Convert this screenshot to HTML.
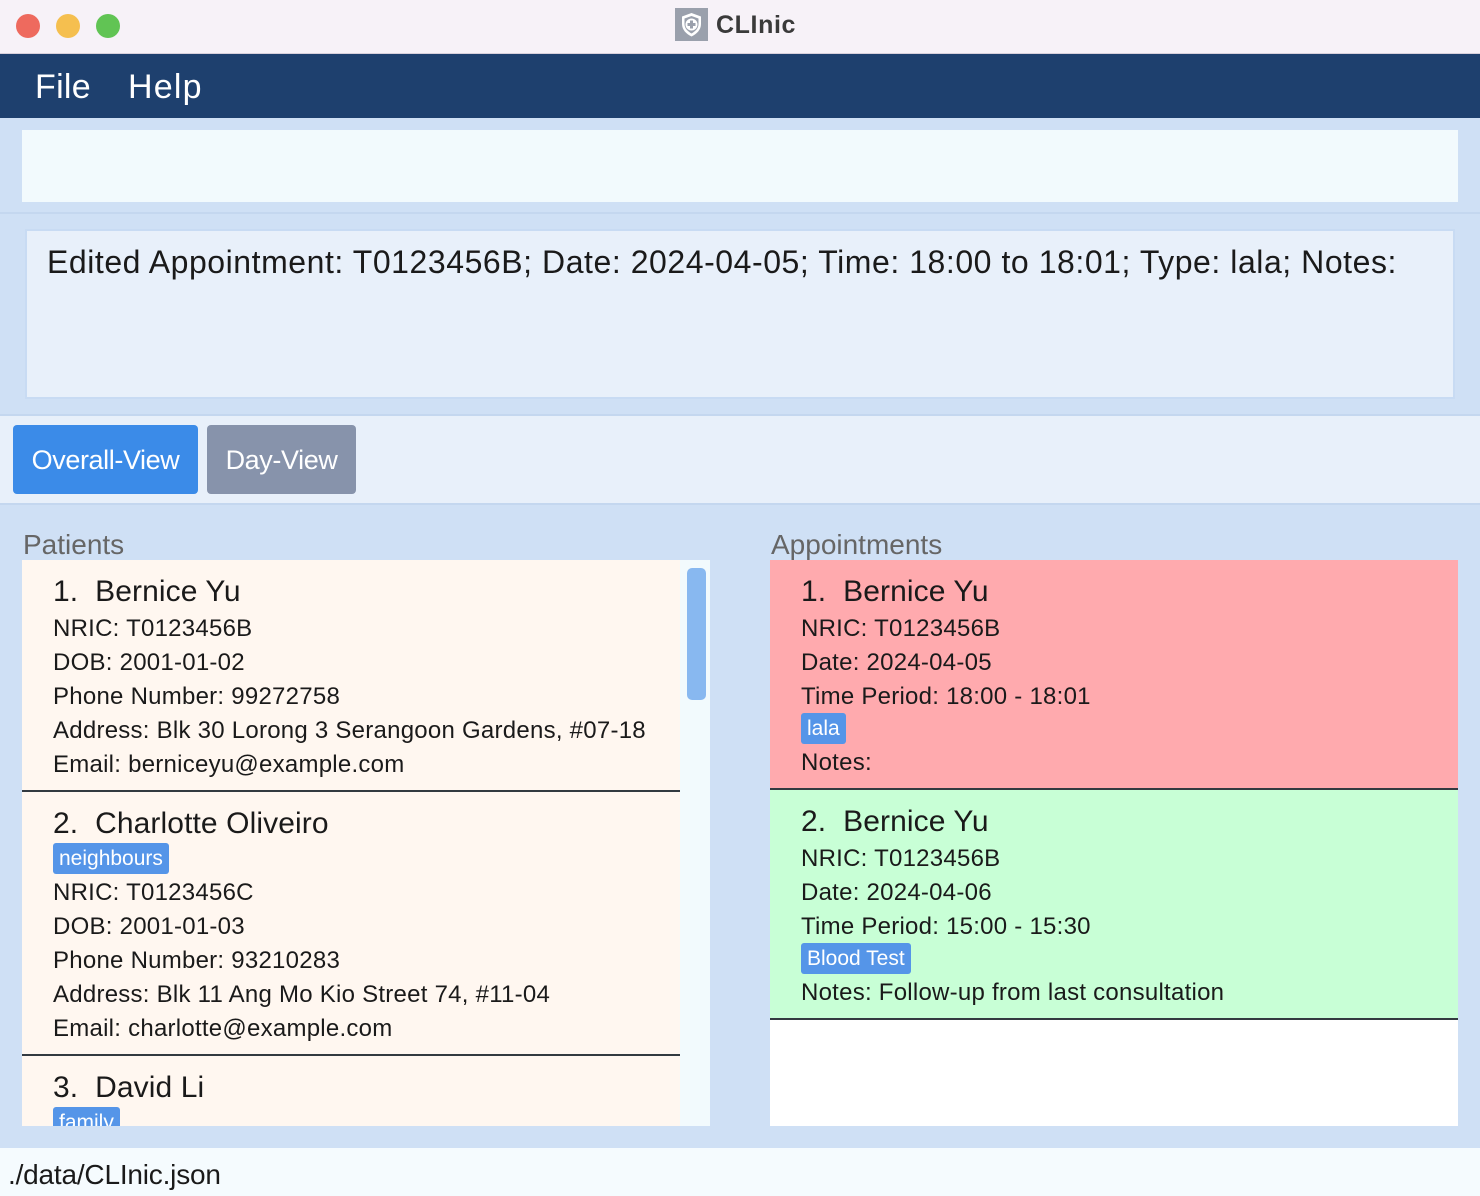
<!DOCTYPE html>
<html><head><meta charset="utf-8"><style>
*{margin:0;padding:0;box-sizing:border-box}
body{width:1480px;height:1196px;overflow:hidden;background:#cfe0f5;font-family:"Liberation Sans",sans-serif;position:relative;color:#1a1a1a}
.abs{position:absolute}
.t{white-space:nowrap;letter-spacing:-0.4px}
.title{top:0;left:0;width:1480px;height:54px;background:#f7f2f8;border-bottom:1px solid #d8d0dc}
.dot{width:24px;height:24px;border-radius:50%;top:14px}
.menu{top:54px;left:0;width:1480px;height:64px;background:#1e406e}
.card{position:absolute;left:0;width:100%}
.card .ln{position:absolute;left:31px;font-size:24px;white-space:nowrap;letter-spacing:0.25px}
.card .nm{position:absolute;left:31px;font-size:30px;white-space:nowrap;letter-spacing:0.1px}
.tag{position:absolute;left:31px;background:#5595e8;color:#fff;font-size:21px;height:31px;line-height:31px;padding:0 6px;border-radius:3px;white-space:nowrap;letter-spacing:0}
.div{position:absolute;left:0;width:100%;height:2px;background:#333a40}
</style></head><body>
<div class="abs title"></div>
<div class="abs dot" style="left:16px;background:#ee6a5e"></div>
<div class="abs dot" style="left:56px;background:#f5bf4f"></div>
<div class="abs dot" style="left:96px;background:#61c454"></div>
<svg class="abs" style="left:675px;top:8px" width="33" height="33" viewBox="0 0 33 33"><rect width="33" height="33" fill="#9aa0ac"/><path d="M16.5 5 L26 8.5 V16 C26 22 21.5 26 16.5 28.5 C11.5 26 7 22 7 16 V8.5 Z" fill="#fff"/><path d="M16.5 8 L23.5 10.5 V16 C23.5 20.5 20 23.5 16.5 25.5 C13 23.5 9.5 20.5 9.5 16 V10.5 Z" fill="#9aa0ac"/><circle cx="16.5" cy="16.5" r="6" fill="#fff"/><path d="M15 12.5h3v2.5h2.5v3h-2.5v2.5h-3v-2.5h-2.5v-3h2.5z" fill="#9aa0ac"/></svg>
<div class="abs t" style="left:716px;top:11px;font-size:25px;font-weight:bold;color:#3a3a3a;letter-spacing:0.6px">CLInic</div>
<div class="abs menu"></div>
<div class="abs t" style="left:35px;top:68px;font-size:34px;color:#fff;letter-spacing:0.3px">File</div>
<div class="abs t" style="left:128px;top:68px;font-size:34px;color:#fff;letter-spacing:1.2px">Help</div>
<div class="abs" style="left:22px;top:130px;width:1436px;height:72px;background:#f2fafd"></div>
<div class="abs" style="left:0;top:212px;width:1480px;height:2px;background:#c4d7ef"></div>
<div class="abs" style="left:25px;top:229px;width:1430px;height:170px;background:#e8f0fa;border:2px solid #c8dbf3"></div>
<div class="abs t" style="left:47px;top:244px;font-size:32px;letter-spacing:0.55px">Edited Appointment: T0123456B; Date: 2024-04-05; Time: 18:00 to 18:01; Type: lala; Notes:</div>
<div class="abs" style="left:0;top:414px;width:1480px;height:91px;background:#e8f0fa;border-top:2px solid #c4d7ef;border-bottom:2px solid #c4d7ef"></div>
<div class="abs" style="left:13px;top:425px;width:185px;height:69px;background:#3b8be8;border-radius:4px"></div>
<div class="abs t" style="left:13px;top:445px;width:185px;text-align:center;font-size:27px;color:#fff">Overall-View</div>
<div class="abs" style="left:207px;top:425px;width:149px;height:69px;background:#8793ab;border-radius:4px"></div>
<div class="abs t" style="left:207px;top:445px;width:149px;text-align:center;font-size:27px;color:#fff">Day-View</div>
<div class="abs t" style="left:23px;top:529px;font-size:28px;color:#666;letter-spacing:0">Patients</div>
<div class="abs t" style="left:771px;top:529px;font-size:28px;color:#666;letter-spacing:0">Appointments</div>
<div class="abs" style="left:22px;top:560px;width:688px;height:566px;background:#f2fafd;overflow:hidden">
 <div class="abs" style="left:665px;top:8px;width:19px;height:132px;background:#88b8f0;border-radius:5px"></div>
 <div class="abs" style="left:0;top:0;width:658px;height:566px;background:#fff7f0">
  <div class="card" style="top:0;height:230px">
   <div class="nm" style="top:15px">1.&nbsp; Bernice Yu</div>
   <div class="ln" style="top:55px">NRIC: T0123456B</div>
   <div class="ln" style="top:89px">DOB: 2001-01-02</div>
   <div class="ln" style="top:123px">Phone Number: 99272758</div>
   <div class="ln" style="top:157px">Address: Blk 30 Lorong 3 Serangoon Gardens, #07-18</div>
   <div class="ln" style="top:191px">Email: berniceyu@example.com</div>
  </div>
  <div class="div" style="top:230px"></div>
  <div class="card" style="top:232px">
   <div class="nm" style="top:15px">2.&nbsp; Charlotte Oliveiro</div>
   <div class="tag" style="top:51px">neighbours</div>
   <div class="ln" style="top:87px">NRIC: T0123456C</div>
   <div class="ln" style="top:121px">DOB: 2001-01-03</div>
   <div class="ln" style="top:155px">Phone Number: 93210283</div>
   <div class="ln" style="top:189px">Address: Blk 11 Ang Mo Kio Street 74, #11-04</div>
   <div class="ln" style="top:223px">Email: charlotte@example.com</div>
  </div>
  <div class="div" style="top:494px"></div>
  <div class="card" style="top:496px">
   <div class="nm" style="top:15px">3.&nbsp; David Li</div>
   <div class="tag" style="top:51px">family</div>
  </div>
 </div>
</div>
<div class="abs" style="left:770px;top:560px;width:688px;height:566px;background:#fff;overflow:hidden">
 <div class="card" style="top:0;height:228px;background:#ffaaae">
  <div class="nm" style="top:15px">1.&nbsp; Bernice Yu</div>
  <div class="ln" style="top:55px">NRIC: T0123456B</div>
  <div class="ln" style="top:89px">Date: 2024-04-05</div>
  <div class="ln" style="top:123px">Time Period: 18:00 - 18:01</div>
  <div class="tag" style="top:153px">lala</div>
  <div class="ln" style="top:189px">Notes:</div>
 </div>
 <div class="div" style="top:228px"></div>
 <div class="card" style="top:230px;height:228px;background:#c8ffd6">
  <div class="nm" style="top:15px">2.&nbsp; Bernice Yu</div>
  <div class="ln" style="top:55px">NRIC: T0123456B</div>
  <div class="ln" style="top:89px">Date: 2024-04-06</div>
  <div class="ln" style="top:123px">Time Period: 15:00 - 15:30</div>
  <div class="tag" style="top:153px">Blood Test</div>
  <div class="ln" style="top:189px">Notes: Follow-up from last consultation</div>
 </div>
 <div class="div" style="top:458px"></div>
</div>
<div class="abs" style="left:0;top:1148px;width:1480px;height:48px;background:#f5fbfe"></div>
<div class="abs t" style="left:8px;top:1159px;font-size:28px;letter-spacing:-0.2px">./data/CLInic.json</div>
</body></html>
